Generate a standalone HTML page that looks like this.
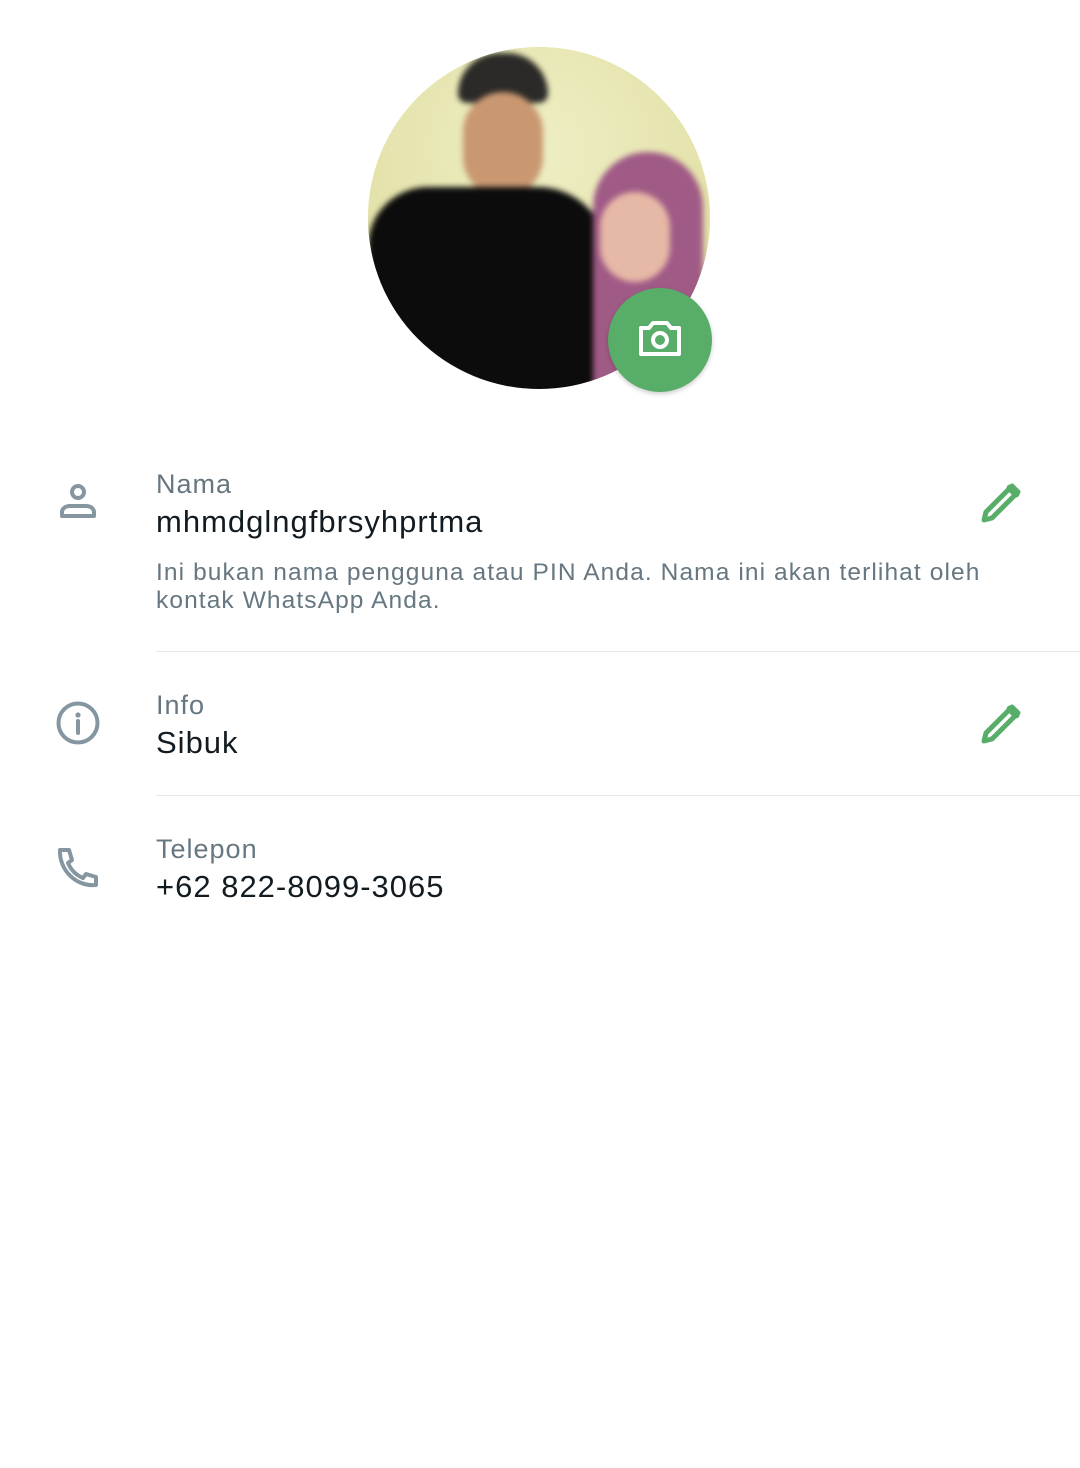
<!DOCTYPE html>
<html><head><meta charset="utf-8"><style>
body{margin:0;width:1080px;height:1468px;background:#fff;font-family:"Liberation Sans",sans-serif;position:relative;overflow:hidden}
.a{position:absolute;white-space:nowrap}
.lbl{font-size:27px;color:#667781;letter-spacing:1px}
.val{font-size:31px;color:#111b21;letter-spacing:1px}
.hr{position:absolute;left:156px;right:0;height:1px;background:#e6e9eb}
</style></head><body>
<div class="a" style="left:368px;top:47px;width:342px;height:342px;border-radius:50%;overflow:hidden;background:#e9e8b6">
 <div class="a" style="left:0;top:0;width:342px;height:342px;background:radial-gradient(circle at 50% 30%,#eeeec4 0,#e2e0a6 70%,#c9c48c 100%)"></div>
 <div style="position:absolute;inset:0;filter:blur(3px)">
 <div class="a" style="left:90px;top:6px;width:90px;height:50px;border-radius:45px 45px 10px 10px;background:#2c2a28"></div>
 <div class="a" style="left:95px;top:45px;width:80px;height:105px;border-radius:40px;background:#c99870"></div>
 <div class="a" style="left:0;top:140px;width:240px;height:240px;border-radius:60px 70px 0 0;background:#0c0c0c"></div>
 <div class="a" style="left:225px;top:105px;width:110px;height:260px;border-radius:55px 55px 10px 10px;background:#a05a86"></div>
 <div class="a" style="left:232px;top:145px;width:70px;height:90px;border-radius:35px;background:#e6b8a6"></div>
 </div>
</div>
<div class="a" style="left:608px;top:288px;width:104px;height:104px;border-radius:50%;background:#58ad68;box-shadow:0 2px 5px rgba(0,0,0,.2)">
 <svg width="104" height="104" viewBox="0 0 104 104"><path d="M33 40h8l4-5h14l4 5h8v26H33z" fill="none" stroke="#fff" stroke-width="4" stroke-linejoin="round"/><circle cx="52" cy="52" r="7" fill="none" stroke="#fff" stroke-width="4"/></svg>
</div>

<svg class="a" style="left:56px;top:482px" width="44" height="40" viewBox="0 0 44 40"><circle cx="22" cy="10" r="6" fill="none" stroke="#8696a0" stroke-width="4"/><path d="M6 34v-4c0-3 3-6 8-6h16c5 0 8 3 8 6v4z" fill="none" stroke="#8696a0" stroke-width="4" stroke-linejoin="round"/></svg>
<div class="a lbl" style="left:156px;top:469px">Nama</div>
<div class="a val" style="left:156px;top:504px">mhmdglngfbrsyhprtma</div>
<div class="a" style="left:156px;top:559px;font-size:24.5px;color:#667781;line-height:28px;letter-spacing:1.1px">Ini bukan nama pengguna atau PIN Anda. Nama ini akan terlihat oleh<br>kontak WhatsApp Anda.</div>
<svg class="a" style="left:978px;top:480px" width="46" height="46" viewBox="0 0 46 46"><path d="M6 40l2-8 26-26 6 6-26 26z" fill="none" stroke="#58ad68" stroke-width="5" stroke-linejoin="round"/><path d="M32 8l6 6" stroke="#58ad68" stroke-width="7" stroke-linecap="round"/></svg>
<div class="hr" style="top:651px"></div>

<svg class="a" style="left:55px;top:700px" width="46" height="46" viewBox="0 0 46 46"><circle cx="23" cy="23" r="19.5" fill="none" stroke="#8696a0" stroke-width="4"/><circle cx="23" cy="15" r="2.6" fill="#8696a0"/><path d="M23 21v12" stroke="#8696a0" stroke-width="4" stroke-linecap="round"/></svg>
<div class="a lbl" style="left:156px;top:690px">Info</div>
<div class="a val" style="left:156px;top:725px">Sibuk</div>
<svg class="a" style="left:978px;top:701px" width="46" height="46" viewBox="0 0 46 46"><path d="M6 40l2-8 26-26 6 6-26 26z" fill="none" stroke="#58ad68" stroke-width="5" stroke-linejoin="round"/><path d="M32 8l6 6" stroke="#58ad68" stroke-width="7" stroke-linecap="round"/></svg>
<div class="hr" style="top:795px"></div>

<svg class="a" style="left:56px;top:846px" width="44" height="42" viewBox="0 0 44 42"><path d="M4 4h9l3 10-4 3c3 7 8 12 15 15l3-4 10 3v8c-20 2-37-15-36-35z" fill="none" stroke="#8696a0" stroke-width="4" stroke-linejoin="round"/></svg>
<div class="a lbl" style="left:156px;top:834px">Telepon</div>
<div class="a val" style="left:156px;top:869px">+62 822-8099-3065</div>
</body></html>
